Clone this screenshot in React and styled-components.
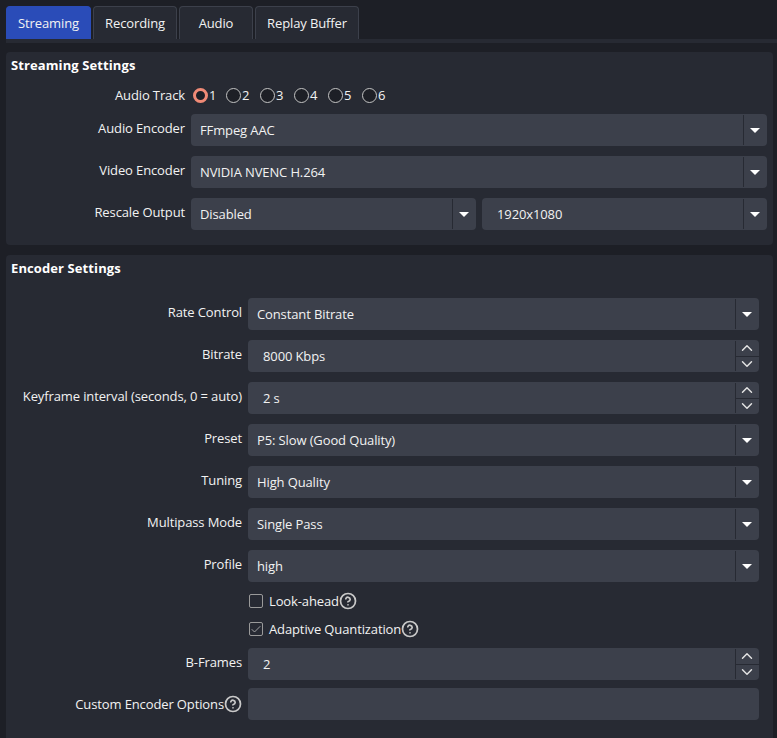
import React from "react";
import styled, { createGlobalStyle } from "styled-components";
import { Check, ChevronDown, ChevronUp, CircleHelp } from "lucide-react";

const Global = createGlobalStyle`
  html, body {
    margin: 0;
    padding: 0;
    background: #1d1f26;
  }
  * {
    box-sizing: border-box;
  }
`;

const Page = styled.div`
  width: 777px;
  height: 738px;
  overflow: hidden;
  padding: 6px 0px 0px 6px;
  background: #1d1f26;
  color: #f2f2f2;
  font-family: "Open Sans", "Liberation Sans", sans-serif;
  font-size: 13px;
  letter-spacing: -0.12px;
`;

const TabBar = styled.div`
  display: flex;
  gap: 2px;
  height: 33px;
`;

const Tab = styled.div`
  width: ${(props) => props.width}px;
  display: flex;
  align-items: center;
  justify-content: center;
  padding-bottom: 1px;
  border: 1px solid ${(props) => (props.active ? "#2a4cb8" : "#3c404b")};
  border-bottom: none;
  border-radius: 4px 4px 0px 0px;
  background: ${(props) => (props.active ? "#2a4cb8" : "#272a33")};
`;

const TabStrip = styled.div`
  height: 4px;
  margin-bottom: 9px;
  background: #272a33;
`;

const Group = styled.section`
  width: 767px;
  height: ${(props) => props.height}px;
  margin-bottom: 10px;
  border-radius: 4px;
  background: #272a33;
`;

const GroupTitle = styled.h2`
  margin: 0px;
  height: ${(props) => props.height}px;
  padding-left: 5px;
  font-size: 13px;
  font-weight: 700;
  line-height: 26px;
  letter-spacing: 0.1px;
  color: #fff;
`;

const Form = styled.div`
  display: flex;
  flex-direction: column;
  gap: 10px;
  padding-right: ${(props) => props.right}px;
`;

const Row = styled.div`
  display: grid;
  grid-template-columns: ${(props) => props.label}px 1fr;
  column-gap: 6px;
  align-items: ${(props) => props.align || "start"};
  margin-top: ${(props) => props.top || 0}px;
`;

const Label = styled.div`
  display: flex;
  justify-content: flex-end;
  align-items: center;
  height: ${(props) => props.height || 28}px;
  white-space: nowrap;
`;

const Fields = styled.div`
  display: grid;
  grid-template-columns: 1fr 1fr;
  gap: 6px;
`;

const Field = styled.div`
  display: flex;
  align-items: center;
  height: 32px;
  padding-left: ${(props) => props.inset || 9}px;
  border-radius: 4px;
  background: #3c404b;
`;

const FieldText = styled.span`
  flex: 1;
`;

const Arrow = styled.div`
  width: 24px;
  height: 30px;
  display: flex;
  align-items: center;
  justify-content: center;
  border-left: 1px solid #272a33;

  &::after {
    content: "";
    margin-left: -1px;
    border-left: 5px solid transparent;
    border-right: 5px solid transparent;
    border-top: 5px solid #fff;
  }
`;

const Spin = styled.div`
  width: 24px;
  height: 30px;
  display: flex;
  flex-direction: column;
  border-left: 1px solid #272a33;
  color: #e4e4e4;
`;

const SpinButton = styled.div`
  flex: 1 1 0;
  min-height: 0;
  overflow: hidden;
  display: flex;
  align-items: center;
  justify-content: center;
  padding-right: 1px;

  &:first-child {
    border-bottom: 1px solid #272a33;
  }

  svg {
    flex-shrink: 0;
  }
`;

const Radios = styled.div`
  display: flex;
  height: 18px;
  padding-left: 2px;
`;

const RadioItem = styled.div`
  width: ${(props) => (props.first ? 33 : 34)}px;
  display: flex;
  align-items: center;
  gap: 1px;
`;

const RadioDot = styled.span`
  width: 15px;
  height: 15px;
  border-radius: 50%;
  background: #1d1f26;
  border: ${(props) => (props.checked ? "3px solid #f08a76" : "1px solid #c4c4c4")};
`;

const CheckRow = styled.div`
  display: flex;
  align-items: center;
  height: 18px;
  margin-left: 1px;
`;

const CheckBox = styled.span`
  width: 14px;
  height: 14px;
  margin-right: 6px;
  display: flex;
  align-items: center;
  justify-content: center;
  border: 1px solid #9a9a9a;
  border-radius: 2px;
  color: #c0c0c0;
`;

const HelpIcon = styled(CircleHelp)`
  width: 18px;
  height: 18px;
  color: #c9c9c9;
  flex-shrink: 0;
`;

const Select = ({ children }) => (
  <Field>
    <FieldText>{children}</FieldText>
    <Arrow />
  </Field>
);

const EditSelect = ({ children }) => (
  <Field inset={15}>
    <FieldText>{children}</FieldText>
    <Arrow />
  </Field>
);

const Spinner = ({ children }) => (
  <Field inset={15}>
    <FieldText>{children}</FieldText>
    <Spin>
      <SpinButton>
        <ChevronUp size={18} strokeWidth={1.9} />
      </SpinButton>
      <SpinButton>
        <ChevronDown size={18} strokeWidth={1.9} />
      </SpinButton>
    </Spin>
  </Field>
);

const tabs = [
  { name: "Streaming", width: 85, active: true },
  { name: "Recording", width: 84 },
  { name: "Audio", width: 74 },
  { name: "Replay Buffer", width: 104 },
];

const App = () => {
  return (
    <Page>
      <Global />
      <TabBar>
        {tabs.map((t) => (
          <Tab key={t.name} width={t.width} active={t.active}>
            {t.name}
          </Tab>
        ))}
      </TabBar>
      <TabStrip />

      <Group height={193}>
        <GroupTitle height={34}>Streaming Settings</GroupTitle>
        <Form right={6}>
          <Row label={179} align="center">
            <Label height={18}>Audio Track</Label>
            <Radios>
              {[1, 2, 3, 4, 5, 6].map((n) => (
                <RadioItem key={n} first={n === 1}>
                  <RadioDot checked={n === 1} />
                  {n}
                </RadioItem>
              ))}
            </Radios>
          </Row>
          <Row label={179}>
            <Label>Audio Encoder</Label>
            <Select>FFmpeg AAC</Select>
          </Row>
          <Row label={179}>
            <Label>Video Encoder</Label>
            <Select>NVIDIA NVENC H.264</Select>
          </Row>
          <Row label={179}>
            <Label>Rescale Output</Label>
            <Fields>
              <Select>Disabled</Select>
              <EditSelect>1920x1080</EditSelect>
            </Fields>
          </Row>
        </Form>
      </Group>

      <Group height={500}>
        <GroupTitle height={43}>Encoder Settings</GroupTitle>
        <Form right={14}>
          <Row label={236}>
            <Label>Rate Control</Label>
            <Select>Constant Bitrate</Select>
          </Row>
          <Row label={236}>
            <Label>Bitrate</Label>
            <Spinner>8000 Kbps</Spinner>
          </Row>
          <Row label={236}>
            <Label>Keyframe interval (seconds, 0 = auto)</Label>
            <Spinner>2 s</Spinner>
          </Row>
          <Row label={236}>
            <Label>Preset</Label>
            <Select>P5: Slow (Good Quality)</Select>
          </Row>
          <Row label={236}>
            <Label>Tuning</Label>
            <Select>High Quality</Select>
          </Row>
          <Row label={236}>
            <Label>Multipass Mode</Label>
            <Select>Single Pass</Select>
          </Row>
          <Row label={236}>
            <Label>Profile</Label>
            <Select>high</Select>
          </Row>
          <Row label={236}>
            <span />
            <CheckRow>
              <CheckBox />
              Look-ahead
              <HelpIcon strokeWidth={2.3} />
            </CheckRow>
          </Row>
          <Row label={236}>
            <span />
            <CheckRow>
              <CheckBox>
                <Check size={15} strokeWidth={1.6} />
              </CheckBox>
              Adaptive Quantization
              <HelpIcon strokeWidth={2.3} />
            </CheckRow>
          </Row>
          <Row label={236}>
            <Label>B-Frames</Label>
            <Spinner>2</Spinner>
          </Row>
          <Row label={236} top={-2}>
            <Label height={32}>
              Custom Encoder Options
              <HelpIcon strokeWidth={2.3} />
            </Label>
            <Field />
          </Row>
        </Form>
      </Group>
    </Page>
  );
};

export default App;
